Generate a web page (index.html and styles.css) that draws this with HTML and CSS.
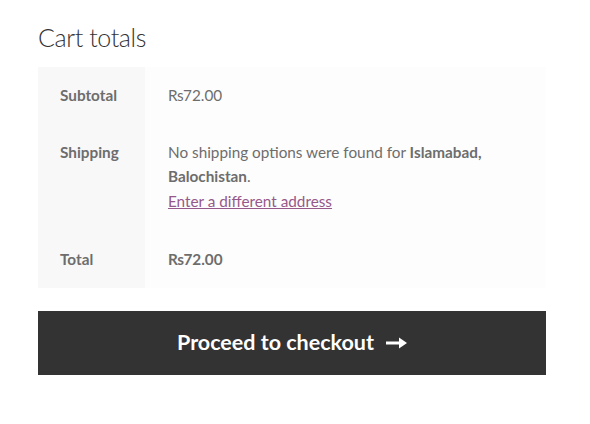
FILE: index.html
```html
<!DOCTYPE html>
<html>
<head>
<meta charset="utf-8">
<link rel="stylesheet" href="styles.css">
</head>
<body>
<div class="cart-totals">
  <h2 class="title">Cart totals</h2>
  <table class="totals">
    <tr class="row">
      <th>Subtotal</th>
      <td><span class="sym">Rs</span>72.00</td>
    </tr>
    <tr class="row">
      <th>Shipping</th>
      <td class="ship">
        <p>No shipping options were found for <strong>Islamabad,</strong> <strong>Balochistan</strong>.</p>
        <a href="#" class="change">Enter a different address</a>
      </td>
    </tr>
    <tr class="row">
      <th>Total</th>
      <td><strong><span class="sym">Rs</span>72.00</strong></td>
    </tr>
  </table>
  <a href="#" class="checkout">Proceed to checkout <span class="arrow"><svg width="21" height="12" viewBox="0 0 21 12"><path d="M0 4.5h13V0.5l8 5.5-8 5.5V7.5H0z" fill="#fff"/></svg></span></a>
</div>
</body>
</html>
```
FILE: styles.css
```css
html, body { margin: 0; padding: 0; background: #fff; }
body { font-family: "Lato", "Liberation Sans", sans-serif; font-size: 15.3px; line-height: 24.5px; color: #6d6d6d; }
.cart-totals { width: 508px; padding: 20px 0 0 38px; }
.title { margin: 0 0 13px; font-size: 25px; line-height: 34px; font-weight: 300; letter-spacing: -0.4px; color: #333; }
.totals { width: 100%; border-collapse: collapse; border-spacing: 0; }
.totals th { width: 107px; box-sizing: border-box; text-align: left; vertical-align: top; font-weight: 700; background: #f8f8f8; padding: 16px 22px; }
.totals td { background: #fdfdfd; padding: 16px 23px; vertical-align: top; }
.ship p { margin: 0; }
.change { display: inline-block; color: #96588a; text-decoration: underline; margin-bottom: 2px; }
.sym { letter-spacing: -0.5px; }
.checkout { display: flex; align-items: center; justify-content: center; gap: 12px; margin-top: 23px; height: 64px; background: #333; color: #fff; font-size: 21.5px; font-weight: 700; text-decoration: none; }
.arrow { display: flex; }
```
